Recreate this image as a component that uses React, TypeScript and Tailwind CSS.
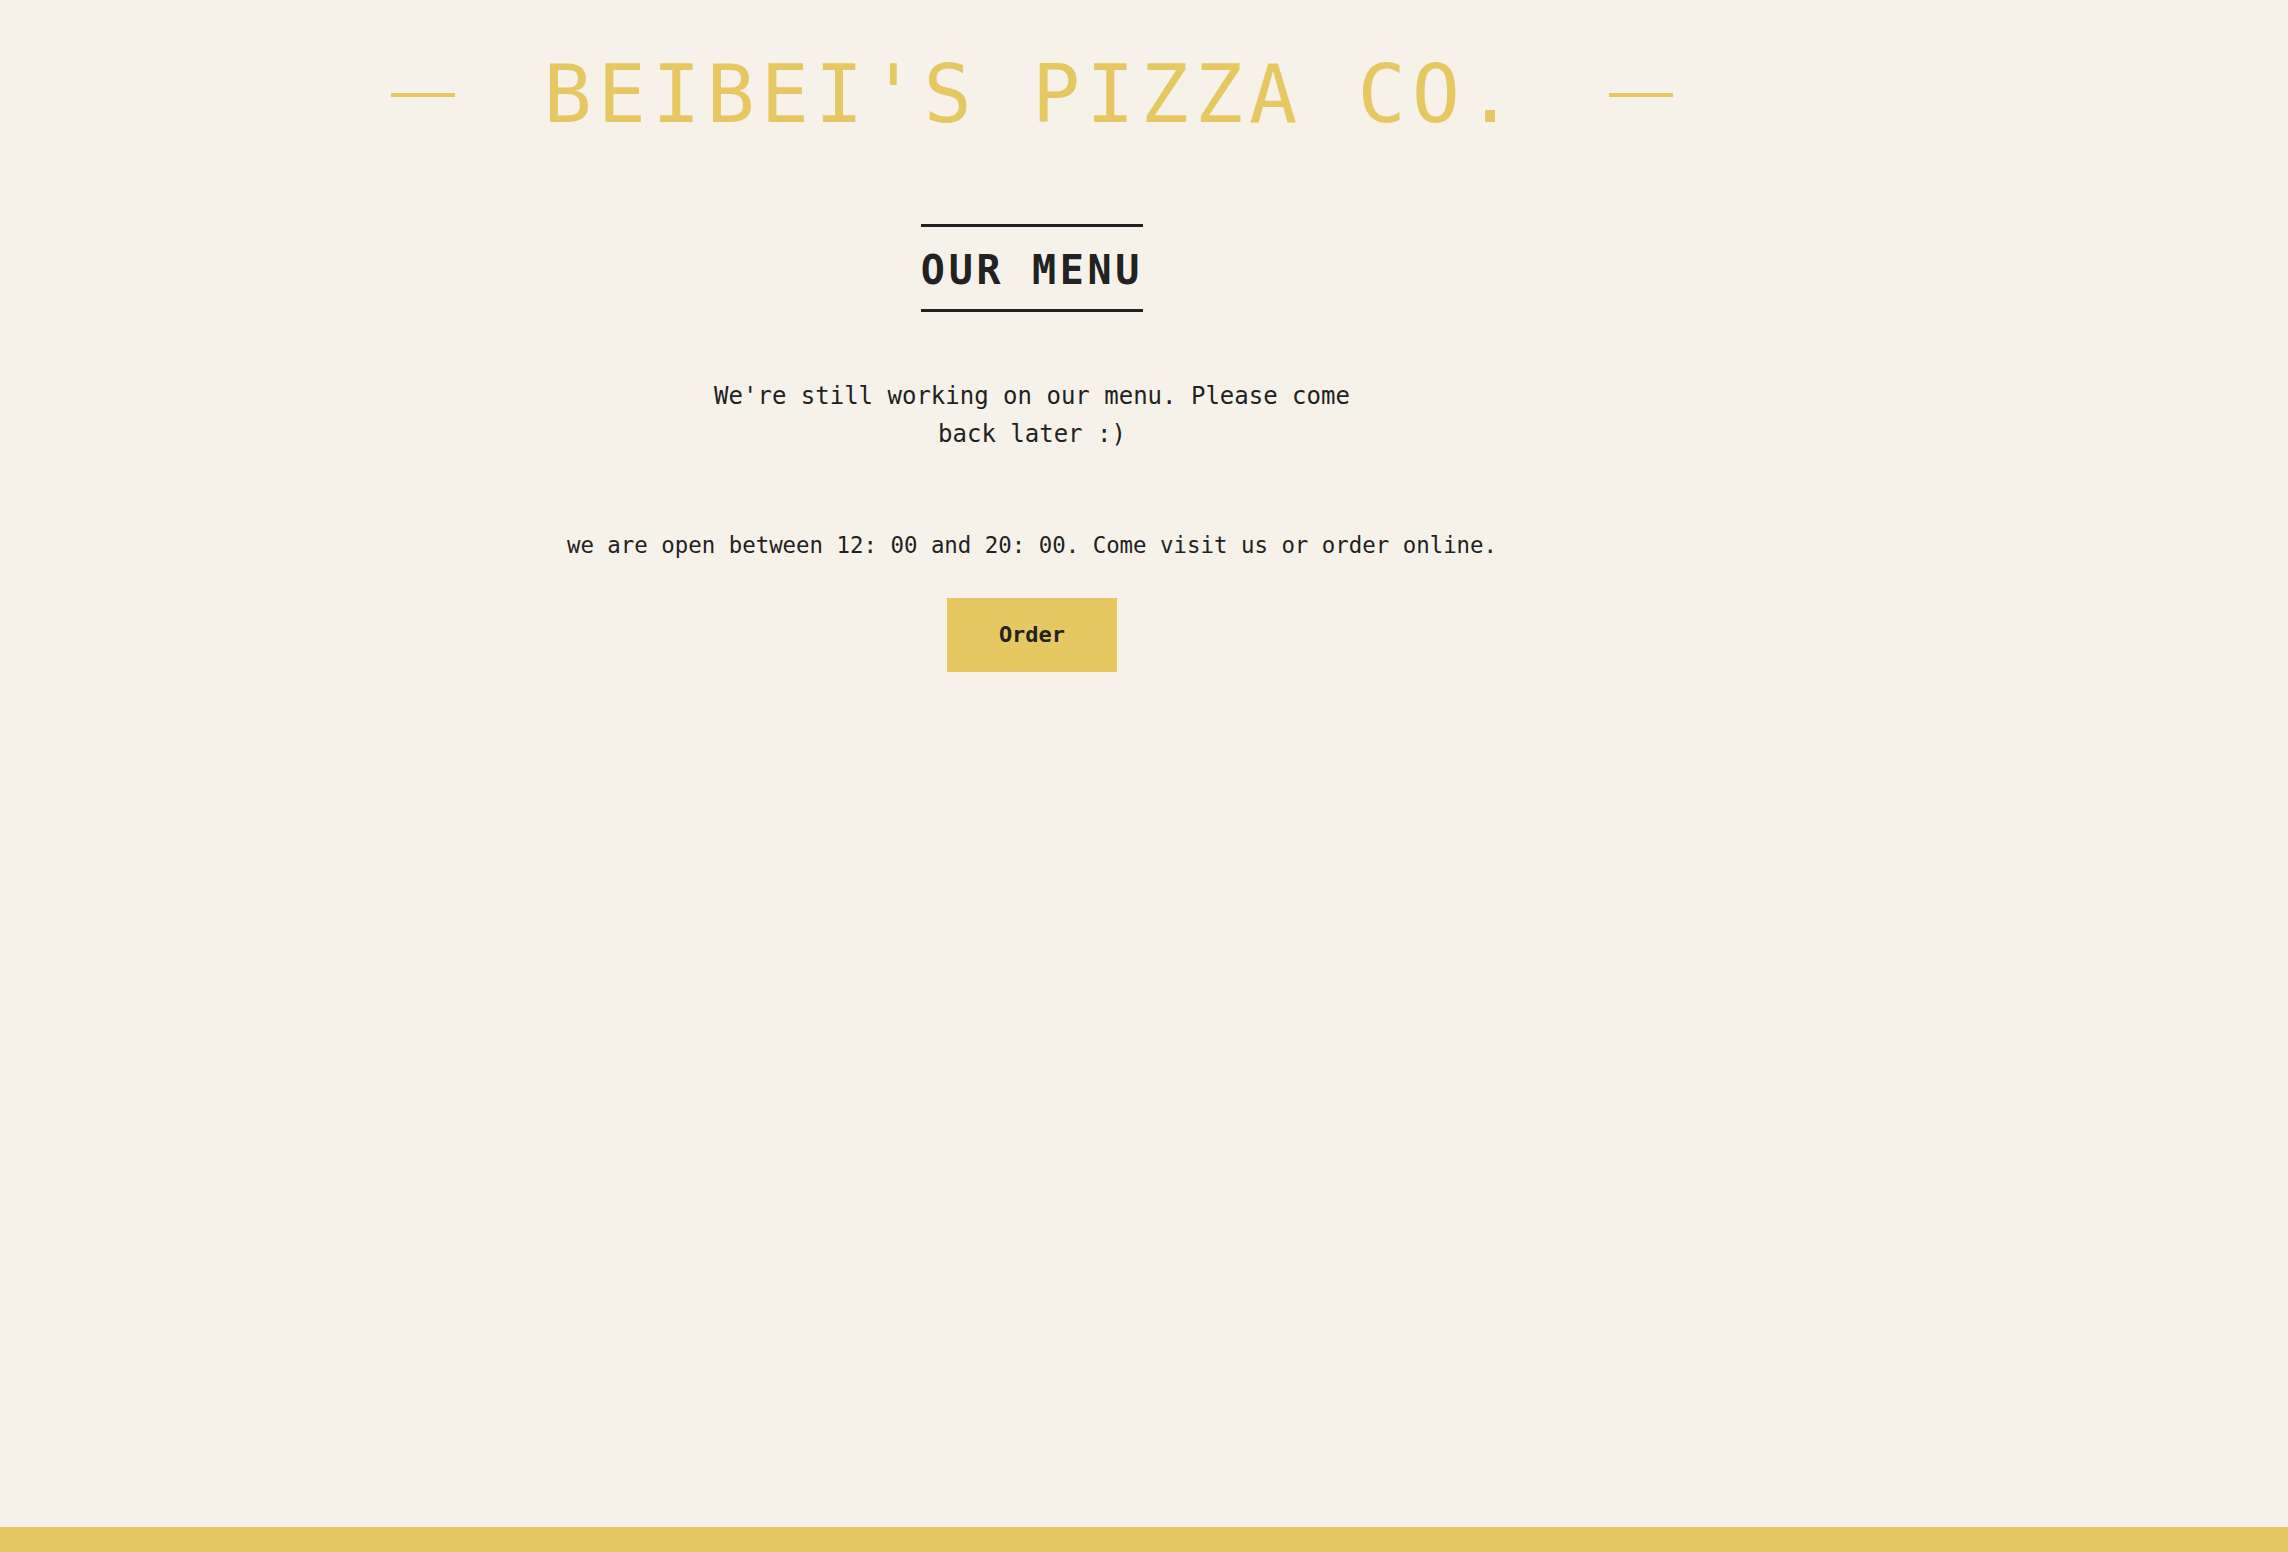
export default function App() {
  const mono = { fontFamily: '"DejaVu Sans Mono", "Liberation Mono", monospace' };
  return (
    <div className="min-h-screen flex flex-col bg-[#F6F2EA] text-[#222222]" style={mono}>
      <main className="flex-1 flex flex-col items-center pr-[224px]">
        <header className="pt-[55px] flex items-center gap-[89px]">
          <span className="block w-[64px] h-[4px] bg-[#E6C862]" />
          <h1 className="text-[80px] leading-[80px] font-light tracking-[6.1px] text-[#E6C862] whitespace-nowrap">
            BEIBEI'S PIZZA CO.
          </h1>
          <span className="block w-[64px] h-[4px] bg-[#E6C862]" />
        </header>

        <h2 className="mt-[89px] inline-block border-y-[3px] border-[#222222] text-[40px] leading-[82px] pt-[2px] h-[88px] font-bold tracking-[3.7px] text-[#222222]">
          OUR MENU
        </h2>

        <p className="mt-[65px] max-w-[640px] text-center text-[24px] leading-[38.4px]">
          We're still working on our menu. Please come back later :)
        </p>

        <p className="mt-[74px] text-center text-[22.4px] leading-[35.84px] whitespace-nowrap">
          we are open between 12: 00 and 20: 00. Come visit us or order online.
        </p>

        <button className="mt-[34px] w-[170px] h-[74px] bg-[#E6C862] text-[22px] font-bold text-[#222222] flex items-center justify-center">
          Order
        </button>
      </main>
      <footer className="h-[25px] w-full bg-[#E6C862]" />
    </div>
  );
}
